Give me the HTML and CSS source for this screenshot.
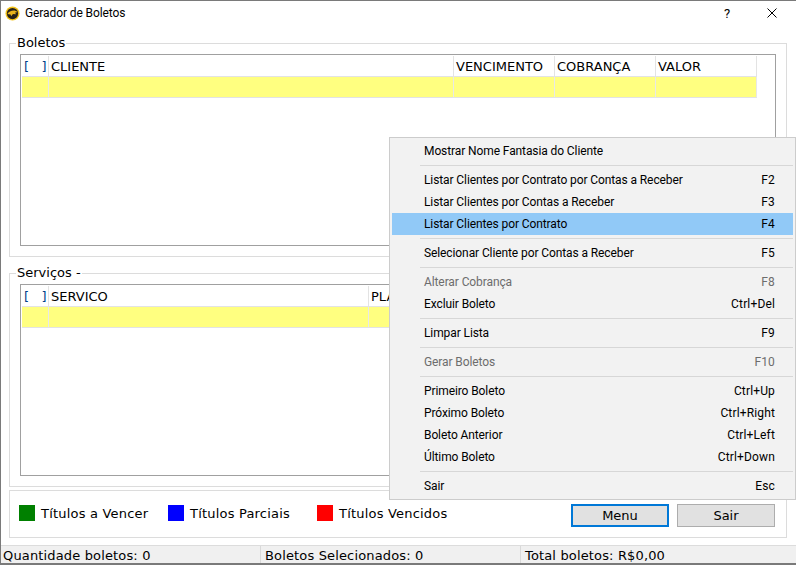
FILE: index.html
```html
<!DOCTYPE html>
<html lang="pt-BR">
<head>
    <meta charset="UTF-8">
    <meta name="viewport" content="width=device-width, initial-scale=1.0">
    <title>Gerador de Boletos</title>
    <link rel="stylesheet" href="styles.css">
</head>
<body>
    <div class="window">
        <div class="titlebar">
            <svg class="app-icon" width="15" height="15" viewBox="0 0 16 16">
                <circle cx="8" cy="8" r="7.5" fill="#f2c21a"/>
                <circle cx="8" cy="8" r="6" fill="#26211a"/>
                <path d="M2.5 8.5 C4 6 7 4.5 11 5 L13.5 6.5 L10.5 7.2 L12 8.8 L8.5 8.6 L6.5 11 L6 9 Z" fill="#e8b31c"/>
            </svg>
            <span class="title">Gerador de Boletos</span>
            <span class="help">?</span>
            <svg class="close" width="10" height="10" viewBox="0 0 10 10">
                <path d="M0.5 0.5 L9.5 9.5 M9.5 0.5 L0.5 9.5" stroke="#000" stroke-width="1" fill="none"/>
            </svg>
        </div>

        <fieldset class="group">
            <legend>Boletos</legend>
            <div class="listbox">
                <table class="grid">
                    <thead>
                        <tr>
                            <th class="col-check"><span class="check">[ &nbsp;&nbsp;]</span></th>
                            <th class="col-client">CLIENTE</th>
                            <th class="col-md">VENCIMENTO</th>
                            <th class="col-md">COBRANÇA</th>
                            <th class="col-md">VALOR</th>
                        </tr>
                    </thead>
                    <tbody>
                        <tr><td></td><td></td><td></td><td></td><td></td></tr>
                    </tbody>
                </table>
            </div>
        </fieldset>

        <fieldset class="group group-services">
            <legend>Serviços -</legend>
            <div class="listbox">
                <table class="grid">
                    <thead>
                        <tr>
                            <th class="col-check"><span class="check">[ &nbsp;&nbsp;]</span></th>
                            <th class="col-service">SERVICO</th>
                            <th class="col-plan">PLANO</th>
                        </tr>
                    </thead>
                    <tbody>
                        <tr><td></td><td></td><td></td></tr>
                    </tbody>
                </table>
            </div>
        </fieldset>

        <div class="legend-panel">
            <div class="legend-item"><span class="swatch swatch-green"></span>Títulos a Vencer</div>
            <div class="legend-item"><span class="swatch swatch-blue"></span>Títulos Parciais</div>
            <div class="legend-item"><span class="swatch swatch-red"></span>Títulos Vencidos</div>
            <div class="buttons">
                <button class="btn btn-focus">Menu</button>
                <button class="btn">Sair</button>
            </div>
        </div>

        <div class="statusbar">
            <div class="status-cell">Quantidade boletos: 0</div>
            <div class="status-cell">Boletos Selecionados: 0</div>
            <div class="status-cell">Total boletos: R$0,00</div>
        </div>
    </div>

    <!-- Context menu -->
    <div class="menu">
        <div class="menu-item"><span>Mostrar Nome Fantasia do Cliente</span></div>
        <div class="menu-sep"></div>
        <div class="menu-item"><span>Listar Clientes por Contrato por Contas a Receber</span><span>F2</span></div>
        <div class="menu-item"><span>Listar Clientes por Contas a Receber</span><span>F3</span></div>
        <div class="menu-item active"><span>Listar Clientes por Contrato</span><span>F4</span></div>
        <div class="menu-sep"></div>
        <div class="menu-item"><span>Selecionar Cliente por Contas a Receber</span><span>F5</span></div>
        <div class="menu-sep"></div>
        <div class="menu-item disabled"><span>Alterar Cobrança</span><span>F8</span></div>
        <div class="menu-item"><span>Excluir Boleto</span><span>Ctrl+Del</span></div>
        <div class="menu-sep"></div>
        <div class="menu-item"><span>Limpar Lista</span><span>F9</span></div>
        <div class="menu-sep"></div>
        <div class="menu-item disabled"><span>Gerar Boletos</span><span>F10</span></div>
        <div class="menu-sep"></div>
        <div class="menu-item"><span>Primeiro Boleto</span><span>Ctrl+Up</span></div>
        <div class="menu-item"><span>Próximo Boleto</span><span>Ctrl+Right</span></div>
        <div class="menu-item"><span>Boleto Anterior</span><span>Ctrl+Left</span></div>
        <div class="menu-item"><span>Último Boleto</span><span>Ctrl+Down</span></div>
        <div class="menu-sep"></div>
        <div class="menu-item"><span>Sair</span><span>Esc</span></div>
    </div>
</body>
</html>
```

FILE: styles.css
```css
* {
    margin: 0;
    padding: 0;
    box-sizing: border-box;
}
html, body {
    width: 796px;
    height: 565px;
    overflow: hidden;
}
body {
    position: relative;
    font-family: "DejaVu Sans", Verdana, sans-serif;
    font-size: 13px;
    color: #000;
    background-color: #fff;
}

/* Window frame */
.window {
    width: 796px;
    height: 565px;
    display: flex;
    flex-direction: column;
    border: 1px solid #7a7a7a;
    border-right: none;
    background-color: #fff;
}

/* Title bar */
.titlebar {
    height: 24px;
    flex-shrink: 0;
    display: flex;
    align-items: center;
    padding-left: 4px;
    font-family: Roboto, "Noto Sans", sans-serif;
    font-size: 12px;
}
.app-icon {
    margin-right: 5px;
}
.title {
    flex: 1;
    letter-spacing: -0.1px;
}
.help {
    width: 12px;
    margin-right: 34px;
    font-size: 13px;
    text-align: center;
}
.close {
    margin-right: 19px;
}

/* Group boxes */
.group {
    margin: 10px 9px 0 8px;
    height: 222px;
    flex-shrink: 0;
    border: 1px solid #dcdcdc;
    padding: 0 10px;
}
.group-services {
    margin-top: 8px;
}
.group legend {
    margin-left: -4px;
    padding: 0 1px;
    line-height: 16px;
}
.listbox {
    margin-top: 3px;
    height: 192px;
    border: 1px solid #a0a0a0;
    padding: 1px;
    overflow: hidden;
    background-color: #fff;
}

/* Grid */
.grid {
    width: 735px;
    border-collapse: separate;
    border-spacing: 0;
    table-layout: fixed;
}
.grid th {
    height: 21px;
    padding: 0 2px;
    font-weight: normal;
    text-align: left;
    white-space: nowrap;
    overflow: hidden;
    border-right: 1px solid #e3e3e3;
    border-bottom: 1px solid #e3e3e3;
}
.grid td {
    height: 21px;
    background-color: #ffff80;
    border-right: 1px solid #e8e8e8;
    border-bottom: 1px solid #e3e3e3;
}
.col-check { width: 27px; }
.col-client { width: 405px; }
.col-md { width: 101px; }
.col-service { width: 320px; }
.col-plan { width: 388px; }
.check {
    color: #00408a;
}

/* Colour legend and buttons */
.legend-panel {
    margin: 3px 9px 0 8px;
    height: 48px;
    flex-shrink: 0;
    display: flex;
    align-items: center;
    border: 1px solid #dcdcdc;
    padding: 0 0 2px 9px;
    letter-spacing: 0.2px;
}
.legend-item {
    width: 149px;
    display: flex;
    align-items: center;
    gap: 6px;
    white-space: nowrap;
}
.swatch {
    width: 16px;
    height: 16px;
}
.swatch-green { background-color: #008000; }
.swatch-blue { background-color: #0000ff; }
.swatch-red { background-color: #ff0000; }
.buttons {
    margin-left: auto;
    margin-right: 11px;
    margin-top: 5px;
    display: flex;
    gap: 8px;
}
.btn {
    width: 98px;
    height: 23px;
    border: 1px solid #adadad;
    background-color: #e1e1e1;
    font-family: inherit;
    font-size: 13px;
    color: #000;
}
.btn-focus {
    border: 2px solid #0078d7;
}

/* Status bar */
.statusbar {
    margin-top: 7px;
    flex: 1;
    display: flex;
    background-color: #f0f0f0;
    border-top: 1px solid #dcdcdc;
    border-bottom: 1px solid #7a7a7a;
    letter-spacing: 0.15px;
}
.status-cell {
    width: 260px;
    padding: 2px 0 0 4px;
    border-right: 1px solid #d9d9d9;
    white-space: nowrap;
}
.status-cell:first-child {
    padding-left: 2px;
}
.status-cell:last-child {
    border-right: none;
}

/* Context menu, lies over the window */
.menu {
    position: absolute;
    left: 389px;
    top: 137px;
    width: 407px;
    height: 363px;
    padding: 2px;
    border: 1px solid #cccccc;
    background-color: #f2f2f2;
    font-family: Roboto, "Noto Sans", sans-serif;
    font-size: 12px;
    color: #000;
}
.menu-item {
    height: 22px;
    display: flex;
    justify-content: space-between;
    align-items: center;
    padding: 0 18px 0 32px;
}
.menu-item span:first-child {
    letter-spacing: -0.1px;
}
.menu-item span:last-child:not(:first-child) {
    letter-spacing: 0.15px;
}
.menu-item.active {
    background-color: #91c9f7;
}
.menu-item.disabled {
    color: #6d6d6d;
}
.menu-sep {
    height: 1px;
    margin: 3px 0 3px 28px;
    background-color: #d7d7d7;
}
```
